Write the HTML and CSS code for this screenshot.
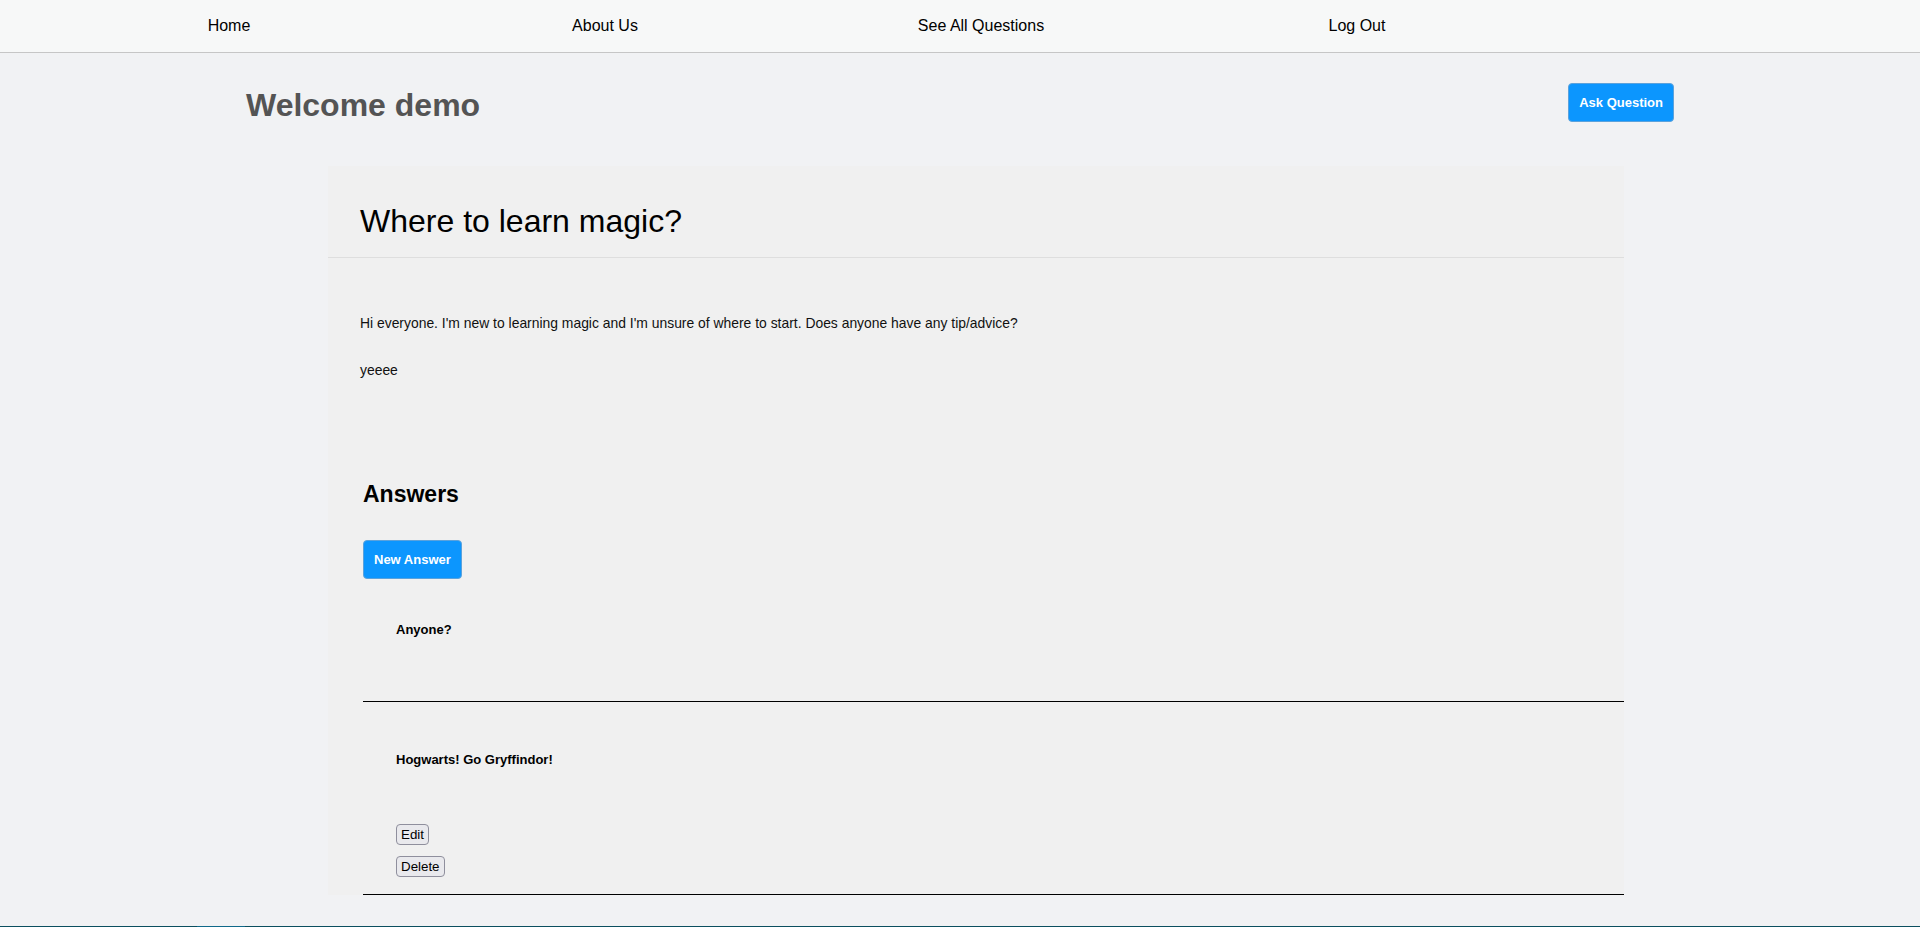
FILE: index.html
```html
<!DOCTYPE html>
<html lang="en">
<head>
<meta charset="utf-8">
<title>Where to learn magic?</title>
<link rel="stylesheet" href="styles.css">
</head>
<body>
<nav class="topnav">
  <a class="nav-link" href="#">Home</a>
  <a class="nav-link" href="#">About Us</a>
  <a class="nav-link" href="#">See All Questions</a>
  <a class="nav-link" href="#">Log Out</a>
</nav>
<header class="welcome-row">
  <h1 class="welcome">Welcome demo</h1>
  <button class="btn-primary" type="button">Ask Question</button>
</header>
<main class="question-card">
  <div class="card-header">
    <h2 class="question-title">Where to learn magic?</h2>
  </div>
  <div class="card-body">
    <p class="question-text">Hi everyone. I'm new to learning magic and I'm unsure of where to start. Does anyone have any tip/advice?</p>
    <p class="question-text question-text-extra">yeeee</p>
  </div>
  <section class="answers">
    <h3 class="answers-title">Answers</h3>
    <button class="btn-primary btn-new" type="button">New Answer</button>
    <div class="answer-list">
      <article class="answer answer-plain">
        <p class="answer-text">Anyone?</p>
      </article>
      <hr class="answer-rule">
      <article class="answer answer-own">
        <p class="answer-text">Hogwarts! Go Gryffindor!</p>
        <div class="answer-actions">
          <button class="btn-small" type="button">Edit</button>
          <button class="btn-small btn-delete" type="button">Delete</button>
        </div>
      </article>
      <hr class="answer-rule">
    </div>
  </section>
</main>
<footer class="site-footer"><span class="footer-accent"></span></footer>
</body>
</html>
```

FILE: styles.css
```css
html, body {
  margin: 0;
  padding: 0;
}

body {
  background: #f1f2f4;
  font-family: "Liberation Sans", Arial, sans-serif;
  color: #000;
}

.topnav {
  height: 52px;
  background: #f7f8f8;
  border-bottom: 1px solid #c6c6c6;
  display: grid;
  grid-template-columns: repeat(4, 376px);
  align-items: center;
  padding-left: 41px;
}

.nav-link {
  justify-self: center;
  font-size: 16px;
  line-height: 18px;
  color: #000;
  text-decoration: none;
}

.welcome-row {
  margin-top: 30px;
  padding: 0 246px;
  display: flex;
  justify-content: space-between;
  align-items: flex-start;
}

.welcome {
  margin: 6px 0 0;
  font-size: 32px;
  line-height: 32px;
  font-weight: bold;
  color: #545454;
}

.btn-primary {
  font-family: "Liberation Sans", Arial, sans-serif;
  font-size: 13px;
  line-height: 15px;
  font-weight: bold;
  color: #fff;
  background: #0c96fe;
  border: 1px solid #5ba2dc;
  border-radius: 4px;
  padding: 11px 10px 11px 10px;
  cursor: pointer;
}

.question-card {
  margin: 44px 0 0 328px;
  width: 1296px;
  background: #f0f0f0;
}

.card-header {
  padding: 37px 32px 17px;
  border-bottom: 1px solid #dedede;
}

.question-title {
  margin: 0;
  font-size: 32px;
  line-height: 37px;
  font-weight: normal;
  color: #000;
}

.card-body {
  padding: 57px 32px 0;
}

.question-text {
  margin: 0;
  font-size: 13.9px;
  line-height: 16px;
  color: #111;
}

.question-text-extra {
  margin-top: 31px;
}

.answers {
  margin-left: 35px;
  padding-top: 102px;
}

.answers-title {
  margin: 0;
  font-size: 23px;
  line-height: 27px;
  font-weight: bold;
  padding-top: 1px;
}

.btn-new {
  display: block;
  margin-top: 32px;
}

.answer {
  padding: 0 33px;
}

.answer-plain {
  padding-top: 43px;
  padding-bottom: 64px;
}

.answer-own {
  padding-top: 50px;
  padding-bottom: 17px;
}

.answer-text {
  margin: 0;
  font-size: 13px;
  line-height: 15px;
  font-weight: bold;
}

.answer-rule {
  margin: 0;
  height: 0;
  border: 0;
  border-top: 1px solid #000;
}

.answer-actions {
  margin-top: 57px;
  display: flex;
  flex-direction: column;
  align-items: flex-start;
  gap: 11px;
}

.btn-small {
  font-family: "Liberation Sans", Arial, sans-serif;
  font-size: 13.33px;
  line-height: 15px;
  color: #000;
  background: #e9e9ed;
  border: 1px solid #8f8f9d;
  border-radius: 4px;
  padding: 2px 4px;
}

.site-footer {
  margin-top: 31px;
  height: 60px;
  background: #0b4f5f;
}

.footer-accent {
  display: block;
  margin-left: 197px;
  width: 48px;
  height: 60px;
  background: #10698a;
}
```
